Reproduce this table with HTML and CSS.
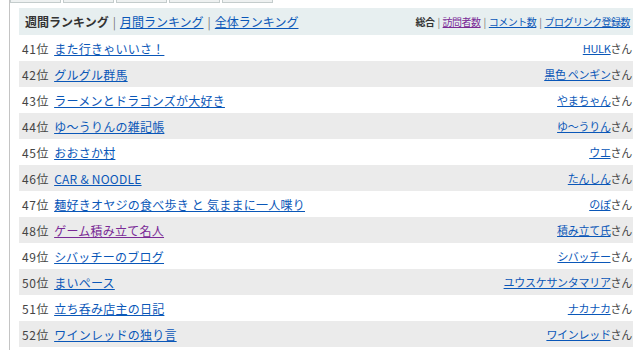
FILE: index.html
```html
<!DOCTYPE html>
<html lang="ja">
<head>
<meta charset="utf-8">
<link rel="stylesheet" href="styles.css">
</head>
<body>
<div class="frame">
  <div class="tabs">
    <div class="tab"></div><div class="tab"></div><div class="tab"></div><div class="tab"></div><div class="tab"></div>
  </div>
  <div class="panel">
    <div class="head">
      <div class="periods"><b>週間ランキング</b><span class="sep">|</span><a href="#">月間ランキング</a><span class="sep">|</span><a href="#">全体ランキング</a></div>
      <div class="sorts"><b>総合</b><span class="sep">|</span><a class="visited" href="#">訪問者数</a><span class="sep">|</span><a href="#">コメント数</a><span class="sep">|</span><a href="#">ブログリンク登録数</a></div>
    </div>
    <ul class="list">
      <li class="row"><span class="title"><span class="rank">41位</span><a href="#">また行きゃいいさ！</a></span><span class="user"><a href="#">HULK</a>さん</span></li>
      <li class="row alt"><span class="title"><span class="rank">42位</span><a href="#">グルグル群馬</a></span><span class="user"><a href="#">黒色 ペンギン</a>さん</span></li>
      <li class="row"><span class="title"><span class="rank">43位</span><a href="#">ラーメンとドラゴンズが大好き</a></span><span class="user"><a href="#">やまちゃん</a>さん</span></li>
      <li class="row alt"><span class="title"><span class="rank">44位</span><a href="#">ゆ～うりんの雑記帳</a></span><span class="user"><a href="#">ゆ～うりん</a>さん</span></li>
      <li class="row"><span class="title"><span class="rank">45位</span><a href="#">おおさか村</a></span><span class="user"><a href="#">ウエ</a>さん</span></li>
      <li class="row alt"><span class="title"><span class="rank">46位</span><a href="#">CAR &amp; NOODLE</a></span><span class="user"><a href="#">たんしん</a>さん</span></li>
      <li class="row"><span class="title"><span class="rank">47位</span><a href="#">麺好きオヤジの食べ歩き と 気ままに一人喋り</a></span><span class="user"><a href="#">のぼ</a>さん</span></li>
      <li class="row alt"><span class="title"><span class="rank">48位</span><a class="visited" href="#">ゲーム積み立て名人</a></span><span class="user"><a href="#">積み立て氏</a>さん</span></li>
      <li class="row"><span class="title"><span class="rank">49位</span><a href="#">シバッチーのブログ</a></span><span class="user"><a href="#">シバッチー</a>さん</span></li>
      <li class="row alt"><span class="title"><span class="rank">50位</span><a href="#">まいペース</a></span><span class="user"><a href="#">ユウスケサンタマリア</a>さん</span></li>
      <li class="row"><span class="title"><span class="rank">51位</span><a href="#">立ち呑み店主の日記</a></span><span class="user"><a href="#">ナカナカ</a>さん</span></li>
      <li class="row alt"><span class="title"><span class="rank">52位</span><a href="#">ワインレッドの独り言</a></span><span class="user"><a href="#">ワインレッド</a>さん</span></li>
    </ul>
  </div>
</div>
</body>
</html>
```

FILE: styles.css
```css
html, body {
  margin: 0;
  padding: 0;
  background: #fff;
}
body {
  font-family: "Noto Sans CJK JP", "DejaVu Sans", sans-serif;
  color: #333;
  font-size: 12px;
}
.frame {
  margin-left: 9px;
  border-left: 1px solid #c4c4c4;
  height: 350px;
  box-sizing: border-box;
}
.tabs {
  display: flex;
  gap: 2px;
  height: 8px;
  align-items: flex-start;
}
.tab {
  width: 49px;
  height: 2px;
  background: #eef1f1;
  border: 1px solid #c4cccc;
  border-top: none;
}
.panel {
  margin-left: 9px;
  width: 614px;
}
.head {
  display: flex;
  justify-content: space-between;
  align-items: center;
  height: 27px;
  background: #e7eff0;
  padding: 0 3px 0 6px;
}
.periods {
  font-size: 12px;
  display: flex;
  align-items: center;
}
.periods b {
  color: #333;
}
.sep {
  color: #777;
  margin: 0 4px;
  font-weight: normal;
}
.sorts {
  font-size: 10px;
  letter-spacing: -0.5px;
  display: flex;
  align-items: center;
}
.sorts .sep {
  margin: 0 3px;
}
a {
  color: #0a57b8;
  text-decoration: underline;
}
a.visited {
  color: #7a2a96;
}
.list {
  list-style: none;
  margin: 0;
  padding: 0;
}
.row {
  display: flex;
  justify-content: space-between;
  align-items: center;
  height: 26px;
  padding: 0 1px 0 3px;
}
.row.alt {
  background: #ebebeb;
}
.rank {
  margin-right: 5px;
  color: #444;
  letter-spacing: 0.6px;
}
.title {
  font-size: 12px;
}
.title a {
  letter-spacing: 0.25px;
}
.user {
  font-size: 11px;
  color: #444;
  letter-spacing: -0.3px;
}
```
